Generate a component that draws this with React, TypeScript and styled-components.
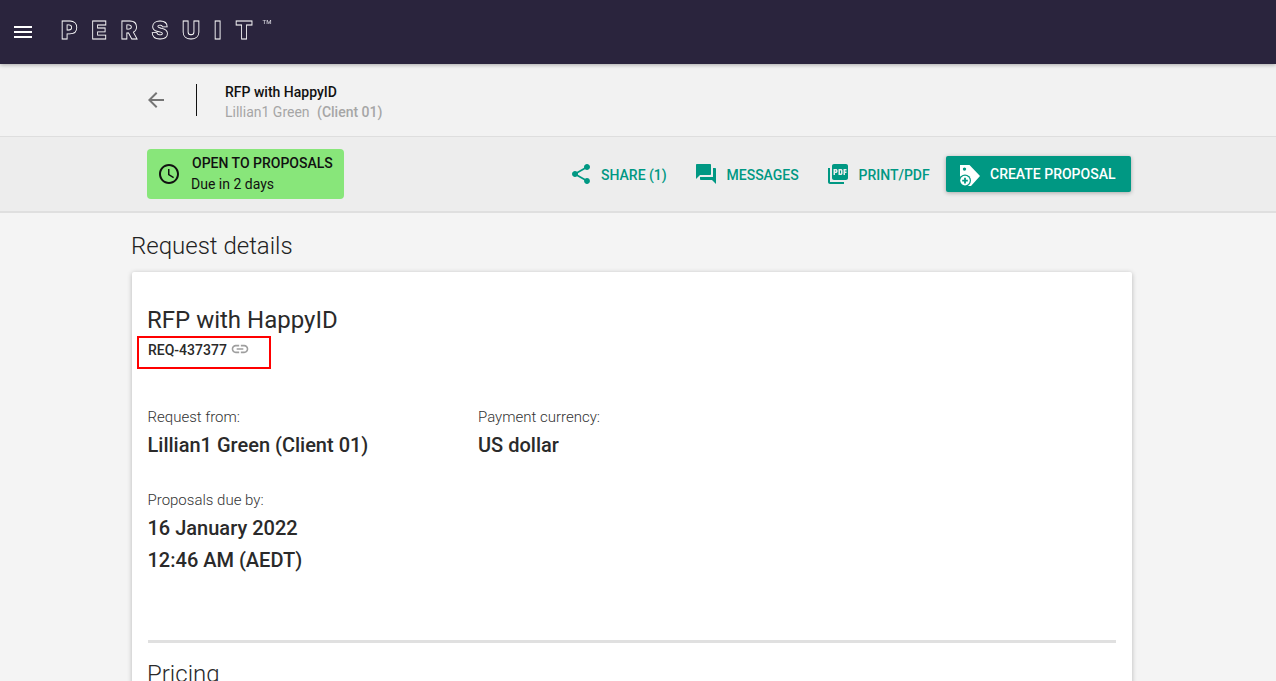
import React from "react";
import styled, { createGlobalStyle } from "styled-components";

const Global = createGlobalStyle`
  html, body { margin: 0; padding: 0; height: 681px; overflow: hidden; background: #f4f4f4; }
  * { box-sizing: border-box; }
  body { font-family: Roboto, "Liberation Sans", sans-serif; color: #212121; }
`;

const TopBar = styled.header`
  height: 64px; background: #2a243d; display: flex; align-items: center;
  padding-left: 11px; box-shadow: 0 1px 4px rgba(0,0,0,.3); position: relative;
`;
const MenuIcon = styled.svg`width: 24px; height: 24px; fill: #fff; margin-top: 0;`;
const Logo = styled.div`
  margin-left: 26px; margin-top: -4px; display: flex; align-items: flex-start;
  font-family: Inter, "Liberation Sans", sans-serif; font-size: 25px; font-weight: 900; line-height: 24px;
  letter-spacing: 14px; color: transparent; -webkit-text-stroke: .8px #fff;
  will-change: opacity;
`;
const LastLetter = styled.span`letter-spacing: 0;`;
const Tm = styled.span`
  font-family: Roboto, sans-serif; font-weight: 500;
  font-size: 6px; line-height: 10px; letter-spacing: 0; color: #cfcdd6; -webkit-text-stroke: 0; margin-left: 10px; margin-top: -1px;
`;
const TitleBar = styled.div`
  height: 73px; background: #f2f2f2; border-bottom: 1px solid #dedede;
  display: flex; align-items: center; padding-left: 144px;
`;
const BackIcon = styled.svg`width: 24px; height: 24px; fill: #757575;`;
const Divider = styled.div`width: 1px; height: 32px; background: #111; margin: 0 28px 0 28px;`;
const TitleText = styled.div`display: flex; flex-direction: column; margin-top: 3px;`;
const TitleMain = styled.div`font-size: 14px; font-weight: 500; line-height: 20px; color: #111;`;
const TitleSub = styled.div`font-size: 14px; line-height: 20px; color: #a6a6a6; font-weight: 400;`;
const Strong = styled.b`font-weight: 500; margin-left: 4px;`;

const StatusBar = styled.div`
  height: 76px; background: #ededed; border-bottom: 2px solid #dfdfdf;
  display: flex; align-items: center; padding: 0 145px 0 147px; justify-content: space-between;
`;
const Status = styled.div`
  width: 197px; height: 50px; background: #88e67a; border-radius: 4px; margin-top: -1px;
  display: flex; align-items: center; padding-left: 10px; color: #111;
`;
const StatusIcon = styled.svg`width: 24px; height: 24px; fill: #111; flex: none;`;
const StatusText = styled.div`margin-left: 10px; font-size: 14px; line-height: 21px;`;
const StatusTitle = styled.div`font-weight: 500; padding-left: 1px;`;
const Actions = styled.div`display: flex; align-items: center; margin-top: 0;`;
const Action = styled.div<{ $w: number }>`
  width: ${p => p.$w}px; display: flex; align-items: center; gap: 8.5px; color: #009883;
  font-size: 14px; font-weight: 500; white-space: nowrap; line-height: 26px; padding-top: 1px;
`;
const ActionIcon = styled.svg`width: 24px; height: 24px; fill: #009883; flex: none; margin-left: -1px; margin-top: -1px;`;
const Create = styled.div`
  width: 185px; height: 36px; background: #009883; color: #fff; border-radius: 2px;
  display: flex; align-items: center; padding-left: 12px; gap: 8px;
  font-size: 14px; font-weight: 500; box-shadow: 0 1px 4px rgba(0,0,0,.3);
`;
const TagIcon = styled.svg`width: 24px; height: 24px; flex: none;`;

const Main = styled.main`padding: 19px 144px 0 131px;`;
const PageTitle = styled.h1`margin: 0 0 12px; font-size: 24px; font-weight: 300; line-height: 28px; color: #222;`;
const Card = styled.section`
  margin-left: 1px; background: #fff; height: 500px; border-radius: 2px; padding: 32px 16px 0 15px;
  box-shadow: 0 1px 5px rgba(0,0,0,.25);
`;
const CardTitle = styled.h2`margin: 0; font-size: 24px; font-weight: 400; line-height: 32px; color: #2a2a2a;`;
const IdRow = styled.div`
  position: relative; display: flex; align-items: center; height: 20px; margin: 4px 0 0 1px;
  font-size: 14px; font-weight: 500; color: #2a2a2a;
`;
const LinkIcon = styled.svg`width: 20px; height: 20px; fill: #9e9e9e; margin-left: 3px; margin-top: -2px;`;
const Highlight = styled.div`
  position: absolute; left: -11px; top: -4px; width: 134px; height: 33px; border: 2px solid #f00;
`;
const Fields = styled.div`display: grid; grid-template-columns: 330.5px 1fr; margin: 47px 0 0 .5px; row-gap: 29px;`;
const Field = styled.div``;
const Label = styled.div`font-size: 15px; font-weight: 300; line-height: 20px; color: #333;`;
const Value = styled.div`font-size: 20px; font-weight: 500; line-height: 32px; color: #2a2a2a; margin-top: 2px;`;
const Rule = styled.hr`border: 0; height: 3px; background: #e0e0e0; margin: 64px 0 0 1px;`;
const Section = styled.h2`margin: 15px 0 0; font-size: 24px; font-weight: 300; line-height: 32px; color: #2a2a2a;`;

export default function App() {
  return (
    <>
      <Global />
      <TopBar>
        <MenuIcon viewBox="0 0 24 24"><path d="M3 18h18v-2H3v2zm0-5h18v-2H3v2zm0-7v2h18V6H3z" /></MenuIcon>
        <Logo>PERSUI<LastLetter>T</LastLetter><Tm>TM</Tm></Logo>
      </TopBar>
      <TitleBar>
        <BackIcon viewBox="0 0 24 24"><path d="M20 11H7.83l5.59-5.59L12 4l-8 8 8 8 1.41-1.41L7.83 13H20v-2z" /></BackIcon>
        <Divider />
        <TitleText>
          <TitleMain>RFP with HappyID</TitleMain>
          <TitleSub>Lillian1 Green <Strong>(Client 01)</Strong></TitleSub>
        </TitleText>
      </TitleBar>
      <StatusBar>
        <Status>
          <StatusIcon viewBox="0 0 24 24"><path d="M11.99 2C6.47 2 2 6.48 2 12s4.47 10 9.99 10C17.52 22 22 17.52 22 12S17.52 2 11.99 2zM12 20c-4.42 0-8-3.58-8-8s3.58-8 8-8 8 3.58 8 8-3.58 8-8 8zm.5-13H11v6l5.25 3.15.75-1.23-4.5-2.67z" /></StatusIcon>
          <StatusText>
            <StatusTitle>OPEN TO PROPOSALS</StatusTitle>
            <div>Due in 2 days</div>
          </StatusText>
        </Status>
        <Actions>
          <Action $w={125.5}>
            <ActionIcon viewBox="0 0 24 24"><path d="M18 16.08c-.76 0-1.44.3-1.96.77L8.91 12.7c.05-.23.09-.46.09-.7s-.04-.47-.09-.7l7.05-4.11c.54.5 1.25.81 2.04.81 1.66 0 3-1.34 3-3s-1.34-3-3-3-3 1.34-3 3c0 .24.04.47.09.7L8.04 9.81C7.5 9.31 6.79 9 6 9c-1.66 0-3 1.34-3 3s1.34 3 3 3c.79 0 1.5-.31 2.04-.81l7.12 4.16c-.05.21-.08.43-.08.65 0 1.61 1.31 2.92 2.92 2.92 1.61 0 2.92-1.31 2.92-2.92s-1.31-2.92-2.92-2.92z" /></ActionIcon>
            SHARE (1)
          </Action>
          <Action $w={132}>
            <ActionIcon viewBox="0 0 24 24"><path d="M21 6h-2v9H6v2c0 .55.45 1 1 1h11l4 4V7c0-.55-.45-1-1-1zm-4 6V3c0-.55-.45-1-1-1H3c-.55 0-1 .45-1 1v14l4-4h10c.55 0 1-.45 1-1z" /></ActionIcon>
            MESSAGES
          </Action>
          <Action $w={119}>
            <ActionIcon viewBox="0 0 24 24"><path d="M20 2H8c-1.1 0-2 .9-2 2v12c0 1.1.9 2 2 2h12c1.1 0 2-.9 2-2V4c0-1.1-.9-2-2-2zm-8.5 7.5c0 .83-.67 1.5-1.5 1.5H9v2H7.5V7H10c.83 0 1.5.67 1.5 1.5v1zm5 2c0 .83-.67 1.5-1.5 1.5h-2.5V7H15c.83 0 1.5.67 1.5 1.5v3zm4-3H19v1h1.5V11H19v2h-1.5V7h3v1.5zM9 9.5h1v-1H9v1zM4 6H2v14c0 1.1.9 2 2 2h14v-2H4V6zm10 5.5h1v-3h-1v3z" /></ActionIcon>
            PRINT/PDF
          </Action>
          <Create>
            <TagIcon viewBox="0 0 24 24">
              <path fill="#fff" d="M2 3h9.5L22 14l-9 10h-3L2 15zM6.5 5.4a1.7 1.7 0 1 0 0 3.4 1.7 1.7 0 0 0 0-3.4z" />
              <circle cx="7" cy="18.6" r="6" fill="#009883" />
              <circle cx="7" cy="18.6" r="4.8" fill="#fff" />
              <path fill="#009883" d="M6.1 15.8h1.8v1.9h1.9v1.8H7.9v1.9H6.1v-1.9H4.2v-1.8h1.9z" />
            </TagIcon>
            CREATE PROPOSAL
          </Create>
        </Actions>
      </StatusBar>
      <Main>
        <PageTitle>Request details</PageTitle>
        <Card>
          <CardTitle>RFP with HappyID</CardTitle>
          <IdRow>
            REQ-437377
            <LinkIcon viewBox="0 0 24 24"><path d="M3.9 12c0-1.71 1.39-3.1 3.1-3.1h4V7H7c-2.76 0-5 2.24-5 5s2.24 5 5 5h4v-1.9H7c-1.71 0-3.1-1.39-3.1-3.1zM8 13h8v-2H8v2zm9-6h-4v1.9h4c1.71 0 3.1 1.39 3.1 3.1s-1.39 3.1-3.1 3.1h-4V17h4c2.76 0 5-2.24 5-5s-2.24-5-5-5z" /></LinkIcon>
            <Highlight />
          </IdRow>
          <Fields>
            <Field>
              <Label>Request from:</Label>
              <Value>Lillian1 Green (Client 01)</Value>
            </Field>
            <Field>
              <Label>Payment currency:</Label>
              <Value>US dollar</Value>
            </Field>
            <Field>
              <Label>Proposals due by:</Label>
              <Value>16 January 2022<br />12:46 AM (AEDT)</Value>
            </Field>
          </Fields>
          <Rule />
          <Section>Pricing</Section>
        </Card>
      </Main>
    </>
  );
}
